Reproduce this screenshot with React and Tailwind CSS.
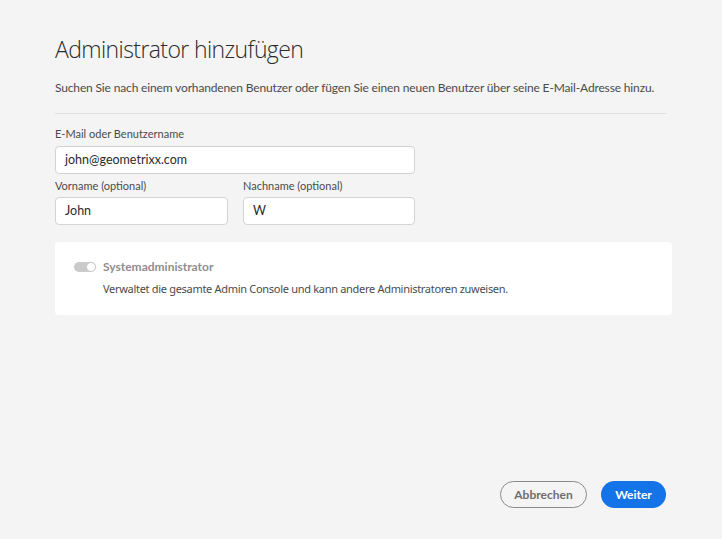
import React from "react";

const bodyFont = "font-['Lato','Liberation_Sans',sans-serif]";

const Field = ({ label, value, className, labelClass }) => (
  <div className={className}>
    <div className={`text-[11px] leading-[12px] text-[#4b4b4b] ${labelClass}`}>{label}</div>
    <div className="mt-[2px] h-[28px] rounded-[4px] border border-[#d3d3d3] bg-white pl-[9px] text-[12.5px] leading-[26px] text-[#2c2c2c]">
      {value}
    </div>
  </div>
);

const Toggle = () => (
  <div className="relative h-[10px] w-[22px] rounded-full bg-[#cacaca]">
    <div className="absolute right-0 top-0 h-[10px] w-[10px] rounded-full border-[1.5px] border-[#cacaca] bg-white" />
  </div>
);

export default function App() {
  return (
    <div className={`flex min-h-[539px] w-[722px] flex-col bg-[#f4f4f4] px-[55px] ${bodyFont}`}>
      <h1 className="pt-[34px] font-['Open_Sans',sans-serif] text-[23px] font-light leading-[30px] tracking-[-0.6px] text-[#2c2c2c]">
        Administrator hinzufügen
      </h1>
      <p className="mt-[16px] whitespace-nowrap text-[12px] leading-[16px] tracking-[-0.15px] text-[#4b4b4b]">
        Suchen Sie nach einem vorhandenen Benutzer oder fügen Sie einen neuen Benutzer über seine E-Mail-Adresse hinzu.
      </p>
      <div className="mt-[17px] h-px w-[611px] bg-[#dedede]" />

      <Field className="mt-[6px] w-[360px]" labelClass="h-[24px] pt-[8px]" label="E-Mail oder Benutzername" value="john@geometrixx.com" />
      <div className="flex w-[360px] gap-[15px]">
        <Field className="w-[173px]" labelClass="h-[21px] pt-[6px]" label="Vorname (optional)" value="John" />
        <Field className="w-[172px]" labelClass="h-[21px] pt-[6px]" label="Nachname (optional)" value="W" />
      </div>

      <div className="mt-[17px] h-[73px] w-[617px] rounded-[4px] bg-white pl-[19px] pt-[17px]">
        <div className="flex items-center gap-[7px]">
          <Toggle />
          <span className="text-[12px] font-bold leading-[16px] text-[#8e8e8e]">Systemadministrator</span>
        </div>
        <p className="mt-[6px] pl-[29px] font-['Noto_Sans',sans-serif] text-[11px] leading-[16px] tracking-[-0.3px] text-[#4b4b4b]">
          Verwaltet die gesamte Admin Console und kann andere Administratoren zuweisen.
        </p>
      </div>

      <div className="mt-auto flex justify-end gap-[14px] pb-[31px] pr-[1px]">
        <button className="h-[27px] w-[87px] rounded-full border border-[#8a8a8a] text-[12px] font-bold text-[#6e6e6e]">
          Abbrechen
        </button>
        <button className="h-[27px] w-[65px] rounded-full bg-[#1473e6] text-[12px] font-bold text-white">
          Weiter
        </button>
      </div>
    </div>
  );
}
